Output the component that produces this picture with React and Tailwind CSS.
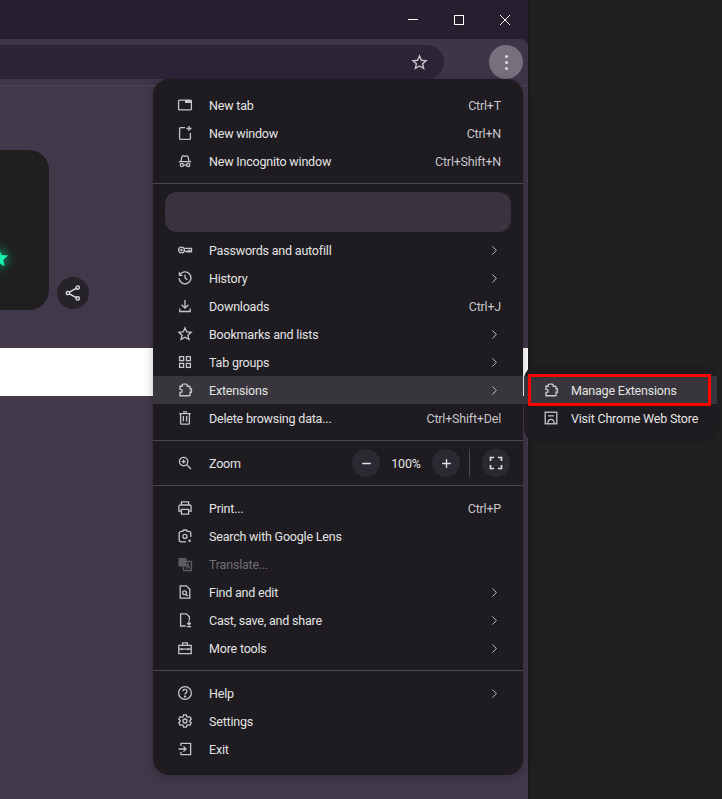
import { Minus, Plus, ChevronRight } from "lucide-react";

const Ic = ({ children, className = "" }) => (
  <svg
    viewBox="0 0 16 16"
    fill="none"
    stroke="currentColor"
    strokeWidth="1.3"
    className={"size-4 shrink-0 " + className}
  >
    {children}
  </svg>
);

const icons = {
  newTab: (
    <>
      <rect x="1.6" y="3.1" width="12.8" height="9.8" rx="1" />
      <path d="M8 3h6.500v3H8z" fill="currentColor" stroke="none" />
    </>
  ),
  newWindow: (
    <>
      <path d="M8 2.600H3.600a1 1 0 0 0-1 1v9.800a1 1 0 0 0 1 1h8.800a1 1 0 0 0 1-1V8" />
      <path d="M12 1v5M9.500 3.500h5" />
    </>
  ),
  incognito: (
    <>
      <path d="M1.800 8.600h12.400M4 8.300l1-4.600a1 1 0 0 1 1.200-.8l1.800.5 1.800-.5a1 1 0 0 1 1.200.8l1 4.600" />
      <circle cx="4.800" cy="12" r="1.600" />
      <circle cx="11.200" cy="12" r="1.600" />
      <path d="M6.400 12h3.200" />
    </>
  ),
  key: (
    <>
      <circle cx="4.500" cy="8" r="2.900" />
      <circle cx="4.500" cy="8" r="0.600" fill="currentColor" />
      <path d="M7.400 6.400h7.100v3.400h-1.700V8.400h-1.300v1.400H9.600V9.200H7.400" />
    </>
  ),
  history: (
    <>
      <path d="M2.600 5.200A6 6 0 1 1 2 8" />
      <path d="M2.400 2.200v3.200h3.200M8 4.800V8l2.400 1.600" />
    </>
  ),
  download: <path d="M8 2v8M4.600 6.800 8 10.200l3.400-3.400M2.800 10.500v3h10.400v-3" />,
  star: (
    <path d="m8 1.900 1.800 4 4.400.4-3.300 2.900 1 4.300L8 11.300l-3.900 2.200 1-4.300-3.300-2.900 4.400-.4z" />
  ),
  groups: (
    <>
      <rect x="2.600" y="2.600" width="4" height="4" />
      <rect x="9.400" y="2.600" width="4" height="4" />
      <rect x="2.600" y="9.400" width="4" height="4" />
      <rect x="9.400" y="9.400" width="4" height="4" />
    </>
  ),
  extension: (
    <path d="M3 4.200h2.200V3.100a1 1 0 0 1 1-1h3a1 1 0 0 1 1 1v1.100h2.100a.8.800 0 0 1 .8.800v2h1.300v3.200h-1.300v2.800a.8.800 0 0 1-.8.800H3v-3.400h.6a1.500 1.500 0 0 0 0-3H3z" strokeWidth="1.400" />
  ),
  trash: (
    <>
      <path d="M3.600 3.600h8.800v9.600a1 1 0 0 1-1 1H4.600a1 1 0 0 1-1-1zM2.200 3.600h11.600M6 1.800h4" />
      <path d="M6.400 6v5.600M9.600 6v5.600" />
    </>
  ),
  zoom: (
    <>
      <circle cx="6.600" cy="6.600" r="4.200" />
      <path d="m9.800 9.800 4.200 4.200M6.600 4.600v4M4.600 6.600h4" />
    </>
  ),
  print: (
    <>
      <path d="M4.400 5V1.900h7.200V5M4.400 11.200H1.900V6.400a1.400 1.400 0 0 1 1.400-1.400h9.400a1.400 1.400 0 0 1 1.400 1.400v4.800h-2.500" />
      <path d="M4.400 9.400h7.200v4.700H4.400z" />
    </>
  ),
  lens: (
    <>
      <path d="M13.800 9V5.400a2 2 0 0 0-2-2h-1.600L9.400 2H6.600l-.8 1.400H4.200a2 2 0 0 0-2 2v6.400a2 2 0 0 0 2 2H9" />
      <circle cx="8" cy="8.400" r="2" />
      <circle cx="12.600" cy="12.800" r="1.200" fill="currentColor" stroke="none" />
    </>
  ),
  translate: (
    <>
      <rect x="1.500" y="2" width="8" height="8.500" fill="currentColor" stroke="none" />
      <path d="M7 5.500h7.500v9H6.500V11" />
      <path d="M9.500 12.500 11 8l1.600 4.500" />
    </>
  ),
  find: (
    <>
      <path d="M3.200 1.800h6.200l3.400 3.400v9H3.200z" />
      <circle cx="7.600" cy="8.800" r="1.900" />
      <path d="m9 10.200 1.900 1.900" />
    </>
  ),
  cast: (
    <>
      <path d="M8.800 14H3.600V1.800h5.800l3 3V8" />
      <path d="M12 8.500v4.200M10.200 11l1.800 1.800 1.800-1.800M9.800 14.600h4.400" />
    </>
  ),
  tools: (
    <>
      <path d="M1.800 5.400h12.400v8.200H1.800zM5.600 5.200V2.800h4.800v2.400M1.800 9.200h12.400" />
      <path d="M5 8.200v2M11 8.200v2" />
    </>
  ),
  help: (
    <>
      <circle cx="8" cy="8" r="6.400" />
      <path d="M6 6.300a2 2 0 1 1 3.200 1.600c-.8.500-1.200.9-1.200 1.700" />
      <circle cx="8" cy="11.600" r="0.500" fill="currentColor" />
    </>
  ),
  settings: (
    <>
      <path d="m6.600 1.800h2.800l.4 1.800 1.300.7 1.800-.6 1.400 2.500-1.400 1.200v1.200l1.400 1.200-1.400 2.500-1.800-.6-1.300.7-.4 1.800H6.600l-.4-1.800-1.300-.7-1.800.6-1.400-2.500 1.400-1.200V7.400L1.700 6.200l1.400-2.500 1.800.6 1.300-.7z" />
      <circle cx="8" cy="8" r="2" />
    </>
  ),
  exit: (
    <>
      <path d="M4 5V2.400h9.600v11.200H4V11" />
      <path d="M1.600 8h7.200M6.400 5.400 9 8l-2.600 2.600" />
    </>
  ),
  store: (
    <>
      <rect x="2.200" y="2.200" width="11.600" height="11.600" />
      <path d="M5 5.800h6M4.800 13.500c0-3 1.400-4.200 3.200-4.200s3.200 1.200 3.200 4.200" />
    </>
  ),
};

const Row = ({ icon, label, keys, arrow, active, disabled }) => (
  <div
    className={
      "flex h-7 items-center px-6 " +
      (active ? "bg-[#38363c] " : "") +
      (disabled ? "text-[#716e75]" : "text-[#e3e3e3]")
    }
  >
    <Ic className={disabled ? "text-[#5f5c63]" : "text-[#c7c5ca]"}>{icons[icon]}</Ic>
    <span className="ml-4 flex-1 pt-[2px]">{label}</span>
    {keys && <span className="-mr-[2px] pt-[2px] text-[#c7c5ca]">{keys}</span>}
    {arrow && <ChevronRight className="-mr-[3px] size-[15px] text-[#c7c5ca]" strokeWidth={1.5} />}
  </div>
);

const Divider = ({ className = "" }) => <div className={"h-px bg-[#4a4553] " + className} />;

const RoundBtn = ({ children }) => (
  <div className="flex size-7 items-center justify-center rounded-full bg-[#2b2931] text-[#e3e3e3]">
    {children}
  </div>
);

export default function App() {
  return (
    <div
      className="relative flex h-[799px] w-[722px] overflow-hidden text-[12.5px] leading-none tracking-[-0.2px]"
      style={{ fontFamily: "Roboto, 'Liberation Sans', sans-serif" }}
    >
      {/* Browser window */}
      <div className="flex w-[528px] flex-col bg-[#261f30]">
        <div className="flex h-[39px] items-center justify-end gap-9 pr-[18px] text-white">
          <div className="h-px w-2.5 bg-white" />
          <div className="size-[10px] border border-white" />
          <svg viewBox="0 0 10 10" stroke="currentColor" strokeWidth="1" className="size-[10px]">
            <path d="M0 0l10 10M10 0 0 10" />
          </svg>
        </div>

        <div className="flex h-[46px] items-start rounded-tr-lg bg-[#3e3548] pt-[6px]">
          <div className="flex h-[34px] w-[444px] items-center justify-end rounded-r-[17px] bg-[#2c2537] pr-4 text-[#c7c5ca]">
            <Ic className="size-[17px]">{icons.star}</Ic>
          </div>
          <div className="ml-[45px] flex size-[34px] flex-col items-center justify-center gap-[3px] rounded-full bg-[#75707c]">
            <span className="size-[3px] rounded-full bg-[#e0dce4]" />
            <span className="size-[3px] rounded-full bg-[#e0dce4]" />
            <span className="size-[3px] rounded-full bg-[#e0dce4]" />
          </div>
        </div>

        {/* Page behind the menu */}
        <div className="flex-1 overflow-hidden border-t border-[#4e4458] bg-[#413849] pt-[64px]">
          <div className="flex items-end">
            <div className="-ml-[51px] flex h-40 w-[100px] justify-center rounded-[20px] bg-[#1f1f1f] pt-[96px]">
              <svg viewBox="0 0 24 24" className="size-6 drop-shadow-[0_0_6px_#00e8a0]">
                <path d="m12 3 2.600 6 6.400.6-4.800 4.300 1.400 6.400L12 17l-5.600 3.300 1.400-6.400L3 9.600 9.400 9z" fill="#19f5b0" />
              </svg>
            </div>
            <div className="mb-px ml-2 flex size-8 items-center justify-center rounded-full bg-[#25222a] text-[#e3e3e3]">
              <svg viewBox="0 0 16 16" fill="none" stroke="currentColor" strokeWidth="1.2" className="size-[18px]">
                <circle cx="12.200" cy="3.200" r="1.500" />
                <circle cx="3.500" cy="8" r="1.500" />
                <circle cx="12.200" cy="12.800" r="1.500" />
                <path d="m4.800 7.300 6.100-3.400M4.800 8.700l6.100 3.400" />
              </svg>
            </div>
          </div>
          <div className="mt-[38px] h-12 bg-white" />
        </div>
      </div>

      <div className="flex-1 border-l border-[#191919] bg-[#1f1f1f]" />

      {/* Chrome menu */}
      <div className="absolute left-[153px] top-[79px] h-[696px] w-[370px] rounded-2xl bg-[#1e1b21] pt-3 shadow-[0_2px_10px_rgba(0,0,0,0.25)]">
        <Row icon="newTab" label="New tab" keys="Ctrl+T" />
        <Row icon="newWindow" label="New window" keys="Ctrl+N" />
        <Row icon="incognito" label="New Incognito window" keys="Ctrl+Shift+N" />
        <Divider className="mt-2" />
        <div className="mx-3 mb-1 mt-2 h-10 rounded-xl bg-[#39333f]" />
        <Row icon="key" label="Passwords and autofill" arrow />
        <Row icon="history" label="History" arrow />
        <Row icon="download" label="Downloads" keys="Ctrl+J" />
        <Row icon="star" label="Bookmarks and lists" arrow />
        <Row icon="groups" label="Tab groups" arrow />
        <Row icon="extension" label="Extensions" arrow active />
        <Row icon="trash" label="Delete browsing data..." keys="Ctrl+Shift+Del" />
        <Divider className="mt-2" />
        <div className="flex h-11 items-center pl-6 pr-[13px] text-[#e3e3e3]">
          <Ic className="text-[#c7c5ca]">{icons.zoom}</Ic>
          <span className="ml-4 flex-1 pt-[2px]">Zoom</span>
          <RoundBtn>
            <Minus className="size-[13px]" strokeWidth={2.500} />
          </RoundBtn>
          <span className="w-[52px] pt-[2px] text-center">100%</span>
          <RoundBtn>
            <Plus className="size-[13px]" strokeWidth={2.500} />
          </RoundBtn>
          <div className="ml-[9px] mr-3 h-7 w-px bg-[#4a4553]" />
          <RoundBtn>
            <svg viewBox="0 0 16 16" fill="none" stroke="currentColor" strokeWidth="1.6" className="size-4">
              <path d="M2.500 6V2.500H6M10 2.500h3.500V6M13.500 10v3.500H10M6 13.500H2.500V10" />
            </svg>
          </RoundBtn>
        </div>
        <Divider />
        <div className="pt-2">
          <Row icon="print" label="Print..." keys="Ctrl+P" />
          <Row icon="lens" label="Search with Google Lens" />
          <Row icon="translate" label="Translate..." disabled />
          <Row icon="find" label="Find and edit" arrow />
          <Row icon="cast" label="Cast, save, and share" arrow />
          <Row icon="tools" label="More tools" arrow />
        </div>
        <Divider className="mt-2" />
        <div className="pt-2">
          <Row icon="help" label="Help" arrow />
          <Row icon="settings" label="Settings" />
          <Row icon="exit" label="Exit" />
        </div>
      </div>

      {/* Extensions submenu */}
      <div className="absolute left-[524px] top-[364px] h-20 w-[193px] rounded-2xl bg-[#1e1b21] pt-3">
        <div className="relative flex h-7 items-center bg-[#38363c] pl-[19px] text-[#e3e3e3]">
          <Ic className="text-[#c7c5ca]">{icons.extension}</Ic>
          <span className="ml-3 pt-[2px]">Manage Extensions</span>
          <div className="absolute -bottom-0.5 left-1 right-1.5 -top-0.5 border-[3px] border-[#fe0000]" />
        </div>
        <div className="flex h-7 items-center pl-[19px] text-[#e3e3e3]">
          <Ic className="text-[#c7c5ca]">{icons.store}</Ic>
          <span className="ml-3 pt-[2px]">Visit Chrome Web Store</span>
        </div>
      </div>
    </div>
  );
}
